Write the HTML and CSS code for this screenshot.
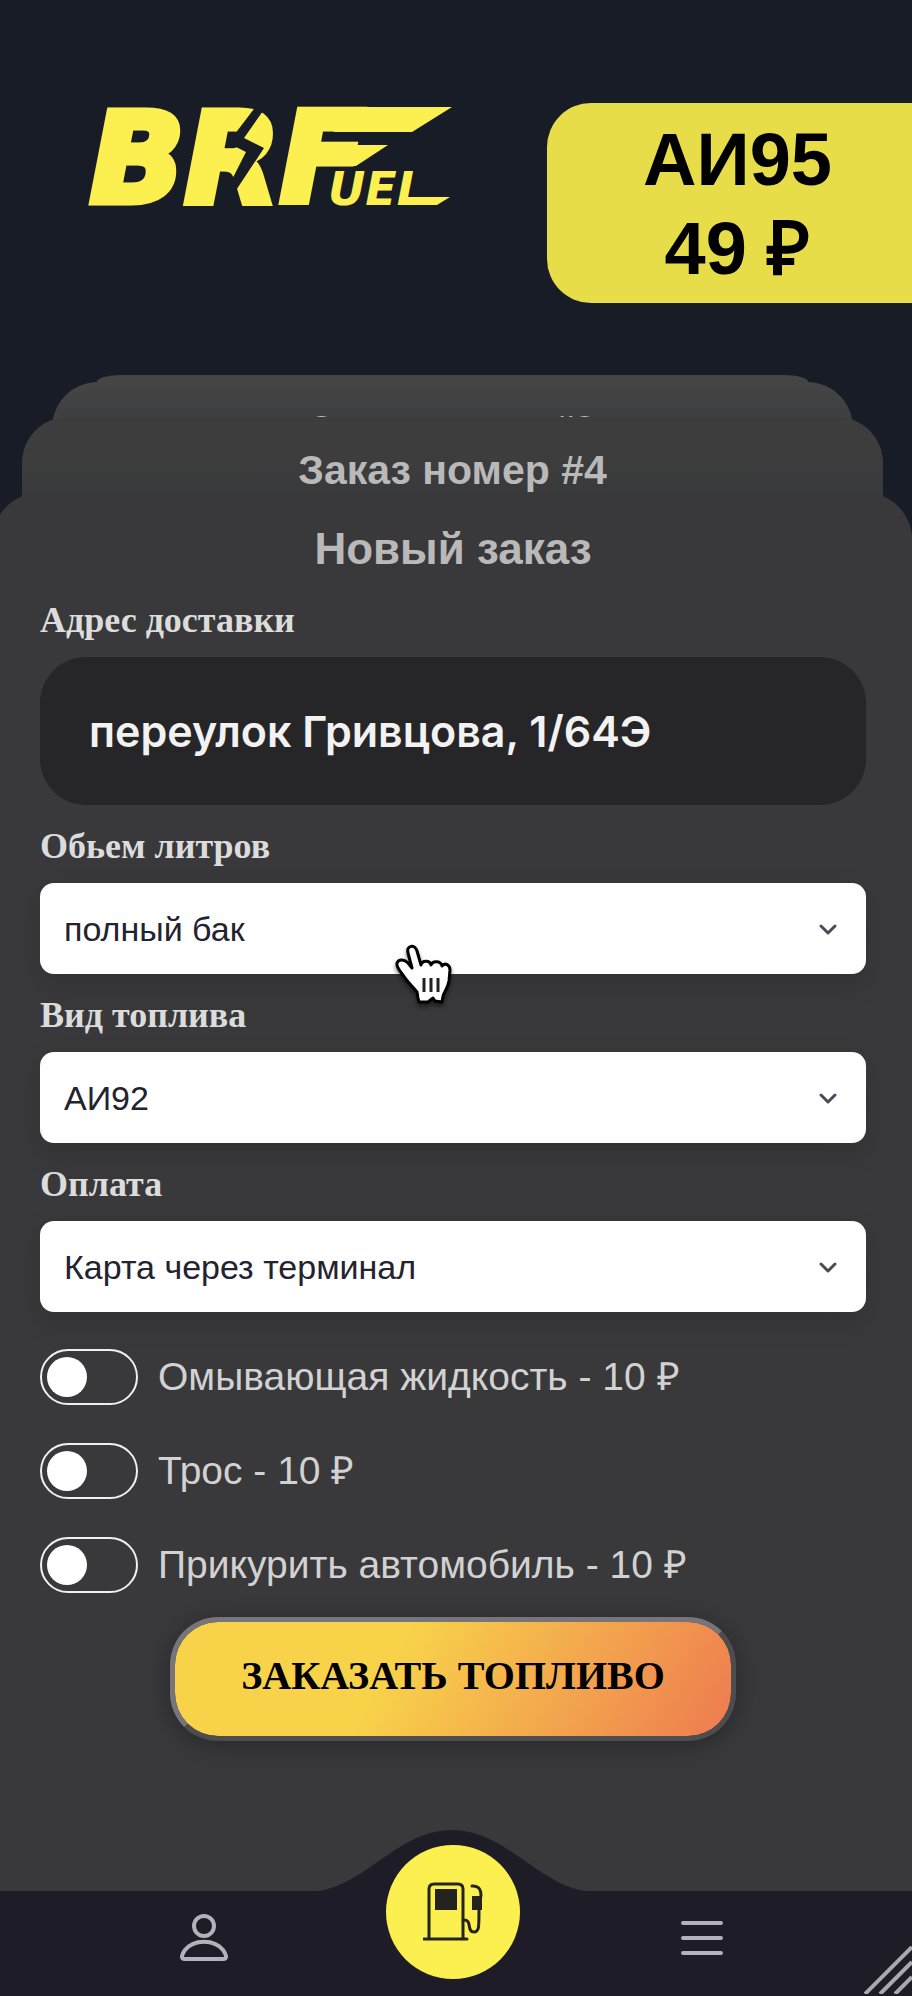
FILE: index.html
```html
<!DOCTYPE html>
<html lang="ru">
<head>
<meta charset="utf-8">
<meta name="viewport" content="width=device-width, initial-scale=1">
<title>BRFuel</title>
<link rel="stylesheet" href="styles.css">
</head>
<body>
<header class="top">
  <svg class="logo" viewBox="0 0 372 104" role="img" aria-label="BRFuel">
    <text class="logo-main" x="6" y="99">BRF</text>
    <polygon class="logo-fill" points="240,4 368,4 328,29 250,29"/>
    <polygon class="logo-fill" points="250,42 304,42 272,63 240,63"/>
    <polygon class="logo-cut" points="176,-2 144,40 162,49 134,104 141,104 180,45 160,35 186,-2"/>
    <text class="logo-sub" x="244" y="102">UEL</text>
    <polygon class="logo-fill" points="322,94 366,94 353,102 320,102"/>
  </svg>
  <p class="price"><span>АИ95</span><span>49 ₽</span></p>
</header>

<main class="stack">
  <div class="card card-back"></div>
  <section class="card card-third"><h2>Заказ номер #3</h2></section>
  <section class="card card-second"><h2>Заказ номер #4</h2></section>
  <form class="card card-front">
    <h1>Новый заказ</h1>
    <div class="field">
      <label for="address">Адрес доставки</label>
      <input class="address" id="address" type="text" value="переулок Гривцова, 1/64Э">
    </div>
    <div class="field">
      <label for="volume">Обьем литров</label>
      <div class="select">
        <select id="volume"><option>полный бак</option></select>
        <svg class="chevron" viewBox="0 0 20 12"><path d="M3 2l7 7 7-7"/></svg>
        <svg class="pointer" viewBox="0 0 60 68">
          <path d="M23 53L22 47C16 40 11 35 8 30C5 26 1 22 2 18C4 13 10 15 13 18L17 23L13 8C11 0 20-1 22 6L26 20C27 15 35 15 36 20C38 15 46 16 47 21C50 17 55 20 55 25L54 36C53 43 49 47 48 51L47 57L40 56L38 53L33 57H24Z"/>
          <path class="pointer-lines" d="M29 33V47M36 33V47M43 33V47"/>
        </svg>
      </div>
    </div>
    <div class="field">
      <label for="fuel">Вид топлива</label>
      <div class="select">
        <select id="fuel"><option>АИ92</option></select>
        <svg class="chevron" viewBox="0 0 20 12"><path d="M3 2l7 7 7-7"/></svg>
      </div>
    </div>
    <div class="field">
      <label for="payment">Оплата</label>
      <div class="select">
        <select id="payment"><option>Карта через терминал</option></select>
        <svg class="chevron" viewBox="0 0 20 12"><path d="M3 2l7 7 7-7"/></svg>
      </div>
    </div>
    <div class="options">
      <label class="option"><input type="checkbox"><span>Омывающая жидкость - 10 ₽</span></label>
      <label class="option"><input type="checkbox"><span>Трос - 10 ₽</span></label>
      <label class="option"><input type="checkbox"><span>Прикурить автомобиль - 10 ₽</span></label>
    </div>
    <button class="submit" type="button">ЗАКАЗАТЬ ТОПЛИВО</button>
  </form>
</main>

<nav class="nav">
  <svg class="hump" viewBox="0 0 276 62"><path d="M0 62C52 56 84 0 138 0S224 56 276 62Z"/></svg>
  <button class="nav-item" type="button" aria-label="Профиль">
    <svg viewBox="0 0 48 48"><circle cx="24" cy="12" r="10"/><path d="M5 45C0 45 2 40 5 36C14 25 34 25 43 36C46 40 48 45 43 45Z"/></svg>
  </button>
  <button class="nav-main" type="button" aria-label="Заправка">
    <svg viewBox="0 0 60 60">
      <path d="M6 57V7Q6 2 11 2H35Q40 2 40 7V57M1 57H44"/>
      <path class="solid" d="M12 7H34V28H12ZM49 14H59V28H49Z"/>
      <path d="M49 4Q58 3 58 14M40 38C50 37 43 50 51 50C56 50 56 46 56 28"/>
    </svg>
  </button>
  <button class="nav-item" type="button" aria-label="Меню">
    <svg viewBox="0 0 48 48"><path d="M5 9H43M5 24H43M5 39H43"/></svg>
  </button>
  <svg class="grip" viewBox="0 0 48 48"><path d="M1 48L48 1M16 48L48 16M31 48L48 31"/></svg>
</nav>
</body>
</html>
```
FILE: styles.css
```css
* { box-sizing: border-box; }

body {
  margin: 0;
  min-height: 100vh;
  display: flex;
  flex-direction: column;
  overflow-x: hidden;
  background: #181c27;
  font-family: "Liberation Sans", Arial, sans-serif;
}

h1, h2, p { margin: 0; }

.top {
  display: flex;
  justify-content: space-between;
  align-items: flex-start;
  padding: 103px 0 72px 84px;
}

.logo { flex: 0 1 372px; min-width: 0; height: 104px; overflow: visible; }
.logo text { font-family: "DejaVu Sans", sans-serif; font-weight: 700; font-style: italic; fill: #fcf050; }
.logo-main { font-size: 124px; stroke: #fcf050; stroke-width: 7px; }
.logo-sub { font-size: 46px; stroke: #181c27; stroke-width: 7px; paint-order: stroke; }
.logo-fill { fill: #fcf050; }
.logo-cut { fill: #181c27; }

.price {
  display: flex;
  flex: none;
  flex-direction: column;
  width: 45%;
  max-width: 365px;
  height: 200px;
  padding: 12px 0 0 16px;
  border-radius: 44px 0 0 44px;
  background: #e6dd49;
  color: #000;
  font-size: 74px;
  font-weight: 700;
  line-height: 89px;
  text-align: center;
}

.stack {
  flex: 1;
  display: flex;
  flex-direction: column;
  margin-left: -7px;
}

.card {
  border-radius: 46px 46px 0 0;
  color: #b9b9b9;
  text-align: center;
}

.card-back { height: 7px; margin: 0 104px; border-radius: 24px 24px 0 0 / 7px 7px 0 0; background: #454546; }

.card-third {
  height: 115px;
  margin: 0 59px;
  padding-top: 24px;
  background: linear-gradient(#454546, #3e3f40 35px);
}

.card-second {
  height: 160px;
  margin: -80px 29px 0;
  padding-top: 29px;
  background: linear-gradient(#3d3d3e 40px, #393a3b 76px);
}

.card-second h2 { font-size: 41px; line-height: 48px; }
.card-third h2 { font-size: 38px; line-height: 48px; }

.card-front {
  flex: 1;
  display: flex;
  flex-direction: column;
  margin-top: -84px;
  padding: 30px 46px 0 47px;
  background: #39393b;
  text-align: left;
}

.card-front h1 { font-size: 44px; line-height: 52px; text-align: center; }

.field { display: flex; flex-direction: column; padding-top: 10px; }

.field label {
  padding-bottom: 6px;
  color: #dcdcdc;
  font: 700 36px/62px "Liberation Serif", "Times New Roman", serif;
}

h1 + .field { padding-top: 14px; }

.address {
  width: 100%;
  height: 148px;
  padding: 0 49px;
  border: 0;
  border-radius: 46px;
  background: #262628;
  color: #f2f2f2;
  font: 600 43px/56px Inter, sans-serif;
}

.select { position: relative; border-radius: 14px; box-shadow: 0 10px 30px #00000020; }

.select select {
  display: block;
  width: 100%;
  height: 91px;
  padding: 0 64px 0 24px;
  border: 0;
  border-radius: 14px;
  appearance: none;
  background: #fff;
  color: #232330;
  font: 34px/44px "Liberation Sans", Arial, sans-serif;
}

.chevron { position: absolute; right: 28px; top: 41px; width: 20px; height: 12px; }
.chevron path { fill: none; stroke: #4b4b58; stroke-width: 3px; stroke-linecap: round; stroke-linejoin: round; }

.pointer { position: absolute; z-index: 1; left: 43%; top: 62px; width: 60px; height: 68px; overflow: visible; filter: drop-shadow(0 3px 2px #00000080); }
.pointer path { fill: #fff; stroke: #000; stroke-width: 3px; stroke-linejoin: round; }
.pointer .pointer-lines { stroke: #222; }

.options { display: flex; flex-direction: column; gap: 36px; padding-top: 36px; }

.option { display: flex; align-items: center; gap: 20px; color: #d2d2d2; font-size: 39px; line-height: 58px; }

.option input {
  flex: none;
  appearance: none;
  width: 98px;
  height: 56px;
  margin: 0;
  padding: 6px 5px;
  border: 2px solid #f0f0f0;
  border-radius: 28px;
}

.option input::before { content: ""; display: block; width: 40px; height: 40px; border-radius: 50%; background: #fff; }
.option input:checked::before { margin-left: auto; }

.submit {
  align-self: center;
  width: 566px;
  max-width: 100%;
  height: 124px;
  margin-top: 23px;
  padding: 0 0 6px;
  border: 5px solid;
  border-color: #77757b #4d4d50 #4d4d50 #77757b;
  border-radius: 48px;
  background: linear-gradient(120deg, #f8d34a 38%, #ee7a50) padding-box;
  box-shadow: 0 4px 24px #00000050;
  color: #000;
  font: 700 40px/48px "Liberation Serif", "Times New Roman", serif;
}

.nav {
  position: relative;
  display: flex;
  justify-content: center;
  align-items: flex-start;
  gap: 158px;
  height: 105px;
  padding-right: 6px;
  background: #1e1c26;
}

.hump { position: absolute; left: calc(50% - 142px); bottom: 104px; width: 276px; height: 62px; }
.hump path { fill: #1e1c26; }

.nav-item { width: 48px; height: 48px; margin-top: 23px; padding: 0; border: 0; background: none; }
.nav-item svg { display: block; width: 48px; height: 48px; fill: none; stroke: #b3b1b9; stroke-width: 4px; stroke-linecap: round; }

.nav-main {
  position: relative;
  display: grid;
  place-items: center;
  width: 134px;
  height: 134px;
  margin-top: -46px;
  padding: 0;
  border: 0;
  border-radius: 50%;
  background: #fcf050;
}

.nav-main svg { width: 60px; height: 60px; fill: none; stroke: #25231d; stroke-width: 3px; stroke-linecap: round; }
.nav-main .solid { fill: #25231d; stroke: none; }

.grip { position: absolute; right: 0; bottom: 2px; width: 48px; height: 48px; }
.grip path { fill: none; stroke: #a9a9ac; stroke-width: 4px; }
```
